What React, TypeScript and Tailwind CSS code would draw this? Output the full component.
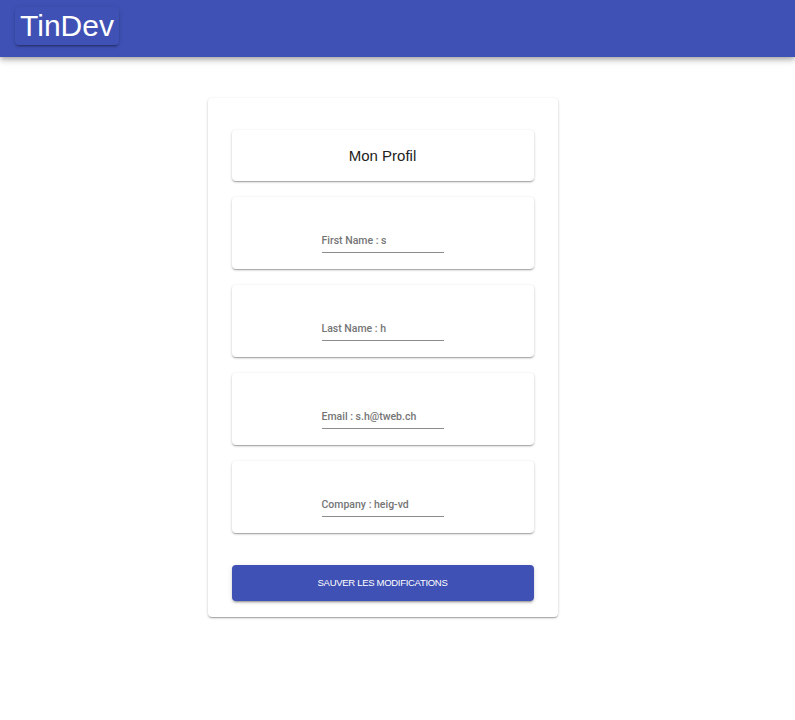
import React from 'react';

const fields = [
  { label: 'First Name', value: 's' },
  { label: 'Last Name', value: 'h' },
  { label: 'Email', value: 's.h@tweb.ch' },
  { label: 'Company', value: 'heig-vd' },
];

const paper =
  'shadow-[0_1px_3px_rgba(0,0,0,0.2),0_1px_1px_rgba(0,0,0,0.14),0_2px_1px_-1px_rgba(0,0,0,0.12)]';

function Field({ label, value }: { label: string; value: string }) {
  return (
    <div className={`h-[72px] rounded bg-white flex justify-center items-end pb-4 ${paper}`}>
      <div className="w-[122px] border-b border-[#8c8c8c] pb-[1px]">
        <span className="text-[10.5px] font-medium text-[#757575] font-['Roboto',sans-serif] leading-none">
          {label} : {value}
        </span>
      </div>
    </div>
  );
}

export default function App() {
  return (
    <div className="min-h-screen bg-white font-['Roboto',sans-serif]">
      <header className="h-[57px] bg-[#3f51b5] px-[15px] pt-[7px] shadow-[0_2px_4px_-1px_rgba(0,0,0,0.2),0_4px_5px_0_rgba(0,0,0,0.14),0_1px_10px_0_rgba(0,0,0,0.12)]">
        <button className="h-[38px] px-[5px] rounded bg-[#3f51b5] text-white text-[30px] leading-none font-['Liberation_Sans',sans-serif] shadow-[0_3px_1px_-2px_rgba(0,0,0,0.2),0_2px_2px_0_rgba(0,0,0,0.14),0_1px_5px_0_rgba(0,0,0,0.12)]">
          TinDev
        </button>
      </header>
      <main className="flex justify-center pt-[41px]">
        <div className={`w-[350px] ml-[-30px] rounded bg-white px-6 pt-8 pb-4 ${paper}`}>
          <div className="flex flex-col gap-4">
            <div className={`h-[51px] rounded bg-white flex items-center justify-center pt-[2px] ${paper}`}>
              <span className="text-[15px] text-[#222] font-['Liberation_Sans',sans-serif]">Mon Profil</span>
            </div>
            {fields.map((f) => (
              <Field key={f.label} label={f.label} value={f.value} />
            ))}
          </div>
          <button className="mt-8 w-full h-9 rounded bg-[#3f51b5] text-white text-[9.5px] tracking-[-0.3px] uppercase font-['Liberation_Sans',sans-serif] shadow-[0_3px_1px_-2px_rgba(0,0,0,0.2),0_2px_2px_0_rgba(0,0,0,0.14),0_1px_5px_0_rgba(0,0,0,0.12)]">
            Sauver les modifications
          </button>
        </div>
      </main>
    </div>
  );
}
